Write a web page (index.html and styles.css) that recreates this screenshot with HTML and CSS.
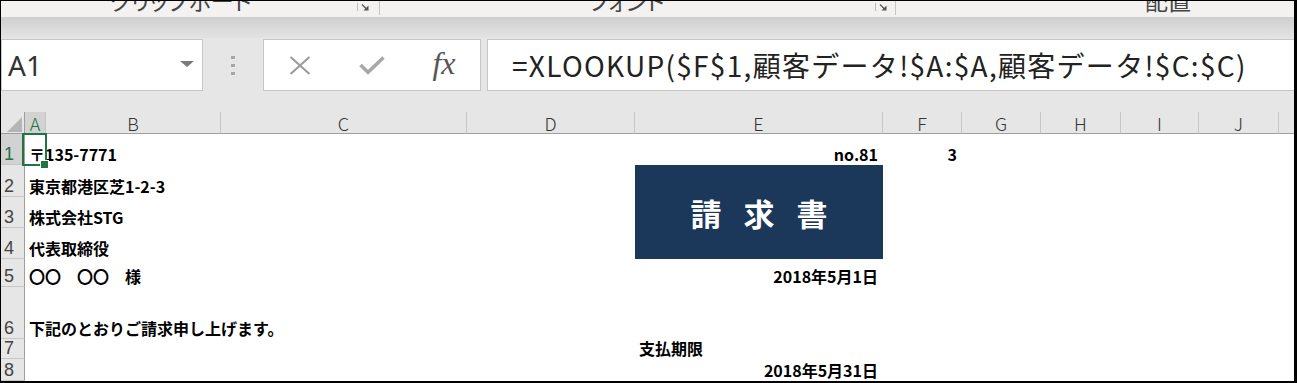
FILE: index.html
```html
<!DOCTYPE html>
<html lang="ja">
<head>
<meta charset="utf-8">
<title>請求書 - Excel</title>
<link rel="stylesheet" href="styles.css">
</head>
<body>
<div class="frame">
  <div class="ribbon">
    <div class="rgroup g1">
      <span class="rlabel">クリップボード</span>
      <svg class="launcher" width="13" height="8" viewBox="0 0 13 8"><path d="M0.5 0 V8" stroke="#bdbdbd" stroke-width="1"/><path d="M5 1.5 L10 6.5" stroke="#555" stroke-width="1.2"/><path d="M6.5 7.5 H11.5 V2.5 Z" fill="#555"/></svg>
    </div>
    <div class="rsep"></div>
    <div class="rgroup g2">
      <span class="rlabel">フォント</span>
      <svg class="launcher l2" width="13" height="8" viewBox="0 0 13 8"><path d="M0.5 0 V8" stroke="#bdbdbd" stroke-width="1"/><path d="M5 1.5 L10 6.5" stroke="#555" stroke-width="1.2"/><path d="M6.5 7.5 H11.5 V2.5 Z" fill="#555"/></svg>
    </div>
    <div class="rsep"></div>
    <div class="rgroup g3">
      <span class="rlabel">配置</span>
    </div>
  </div>
  <div class="band"></div>
  <div class="fbar">
    <div class="namebox"><span class="ref">A1</span><span class="dd"></span></div>
    <div class="grip"><i></i><i></i><i></i></div>
    <div class="fbtns">
      <span class="fbtn"><svg width="22" height="19" viewBox="0 0 22 19"><path d="M1.5 1 L20.5 18 M20.5 1 L1.5 18" stroke="#9c9c9c" stroke-width="2.2" fill="none"/></svg></span>
      <span class="fbtn"><svg width="26" height="20" viewBox="0 0 26 20"><path d="M1.5 10 L9 17.2 L24.5 2.5" stroke="#a8a8a8" stroke-width="3.6" fill="none"/></svg></span>
      <span class="fbtn fx">fx</span>
    </div>
    <div class="formula">=XLOOKUP($F$1,顧客データ!$A:$A,顧客データ!$C:$C)</div>
  </div>
  <div class="sheet">
    <div class="ch corner"><svg width="15" height="15" viewBox="0 0 15 15"><path d="M15 0 V15 H0 Z" fill="#b5b5b5"/></svg></div>
    <div class="ch on">A</div>
    <div class="ch">B</div>
    <div class="ch">C</div>
    <div class="ch">D</div>
    <div class="ch">E</div>
    <div class="ch">F</div>
    <div class="ch">G</div>
    <div class="ch">H</div>
    <div class="ch">I</div>
    <div class="ch">J</div>
    <div class="ch last"></div>

    <div class="rh on">1</div>
    <div class="c cA sel-cell">〒135-7771<span class="sel"></span><span class="handle"></span></div>
    <div class="c cE right">no.81</div>
    <div class="c cF right">3</div>

    <div class="rh">2</div>
    <div class="c cA">東京都港区芝1-2-3</div>
    <div class="title">請求書</div>

    <div class="rh">3</div>
    <div class="c cA">株式会社STG</div>

    <div class="rh">4</div>
    <div class="c cA">代表取締役</div>

    <div class="rh">5</div>
    <div class="c cA">〇〇　〇〇　様</div>
    <div class="c cE right">2018年5月1日</div>

    <div class="rh">6</div>
    <div class="c cA">下記のとおりご請求申し上げます。</div>

    <div class="rh">7</div>
    <div class="c cE">支払期限</div>

    <div class="rh">8</div>
    <div class="c cE right">2018年5月31日</div>
  </div>
</div>
</body>
</html>
```

FILE: styles.css
```css
html, body {
  margin: 0;
  padding: 0;
}

body {
  width: 1297px;
  height: 383px;
  overflow: hidden;
  background: #000;
}

.frame {
  box-sizing: border-box;
  width: 1297px;
  height: 383px;
  border-style: solid;
  border-color: #000;
  border-width: 1px 3px 2px 1px;
  display: flex;
  flex-direction: column;
  background: #fff;
  overflow: hidden;
}

/* ribbon remnant */
.ribbon {
  height: 16px;
  flex: none;
  background: #f3f2f1;
  display: flex;
  overflow: hidden;
  font-family: "Noto Sans CJK JP", sans-serif;
  color: #444;
}

.rgroup {
  display: flex;
  align-items: flex-start;
  box-sizing: border-box;
}

.g1 {
  width: 378px;
  padding-left: 109px;
}

.g2 {
  width: 515px;
  padding-left: 209px;
}

.g3 {
  flex: 1;
  padding-left: 249px;
}

.rlabel {
  font-size: 23px;
  line-height: 24px;
  margin-top: -13px;
  font-feature-settings: "palt";
  white-space: nowrap;
}

.launcher {
  margin-left: auto;
  margin-right: 9px;
  margin-top: 2px;
}

.launcher.l2 {
  margin-right: 7px;
}

.rsep {
  width: 1px;
  height: 14px;
  background: #c6c6c6;
  flex: none;
}

.band {
  height: 21px;
  flex: none;
  background: linear-gradient(#cfcfcf, #e3e3e3);
}

/* formula bar */
.fbar {
  height: 74px;
  flex: none;
  box-sizing: border-box;
  padding-top: 1px;
  background: #e6e6e6;
  display: flex;
  align-items: flex-start;
}

.namebox {
  width: 202px;
  height: 52px;
  box-sizing: border-box;
  background: #fff;
  border: 1px solid #c6c6c6;
  display: flex;
  align-items: center;
  justify-content: space-between;
  padding: 0 8px 0 6px;
}

.ref {
  font-family: "Noto Sans", sans-serif;
  font-size: 28px;
  color: #333;
}

.dd {
  width: 0;
  height: 0;
  border-left: 7px solid transparent;
  border-right: 7px solid transparent;
  border-top: 6px solid #7a7a7a;
  margin-top: -3px;
}

.grip {
  width: 60px;
  height: 52px;
  display: flex;
  flex-direction: column;
  align-items: center;
  justify-content: center;
  gap: 5px;
}

.grip i {
  display: block;
  width: 4px;
  height: 3px;
  background: #a6a6a6;
}

.fbtns {
  width: 218px;
  height: 52px;
  box-sizing: border-box;
  background: #fff;
  border: 1px solid #c6c6c6;
  display: flex;
}

.fbtn {
  width: 72px;
  display: flex;
  align-items: center;
  justify-content: center;
}

.fx {
  font-family: "Liberation Serif", serif;
  font-style: italic;
  font-size: 32px;
  color: #555;
  padding-bottom: 3px;
}

.formula {
  flex: 1;
  margin-left: 6px;
  height: 52px;
  box-sizing: border-box;
  background: #fff;
  border: 1px solid #c6c6c6;
  border-right: none;
  display: flex;
  align-items: center;
  padding-left: 24px;
  font-family: "Noto Sans CJK JP", sans-serif;
  font-size: 28px;
  letter-spacing: 1.3px;
  color: #222;
  white-space: nowrap;
  overflow: hidden;
}

/* sheet */
.sheet {
  flex: 1;
  display: grid;
  grid-template-columns: 24px 21px 175px 246px 168px 248px 79px 79px 80px 78px 80px 1fr;
  grid-template-rows: 22px 31px 32px 31px 31px 28px 52px 20px 1fr;
  overflow: hidden;
  background: #fff;
  font-family: "Noto Sans CJK JP", sans-serif;
}

.ch {
  box-sizing: border-box;
  background: #e6e6e6;
  border-right: 1px solid #c6c6c6;
  border-bottom: 1px solid #9e9e9e;
  display: flex;
  align-items: center;
  justify-content: center;
  font-size: 18px;
  font-weight: 300;
  color: #333;
}

.ch.corner {
  justify-content: flex-end;
  align-items: flex-end;
  padding: 0 2px 1px 0;
  border-right-color: #9e9e9e;
}

.ch.last {
  border-right: none;
}

.ch.on {
  background: #d2d2d2;
  color: #217346;
}

.rh {
  grid-column: 1;
  box-sizing: border-box;
  background: #e6e6e6;
  border-right: 1px solid #9e9e9e;
  border-bottom: 1px solid #c6c6c6;
  display: flex;
  align-items: flex-end;
  padding: 0 0 1px 3px;
  font-family: "Liberation Sans", sans-serif;
  font-size: 18px;
  line-height: 18px;
  color: #444;
  overflow: hidden;
}

.rh.on {
  background: #d2d2d2;
  color: #217346;
}

.c {
  display: flex;
  align-items: flex-end;
  white-space: nowrap;
  padding: 0 5px 1px 4px;
  font-size: 16px;
  line-height: 20px;
  font-weight: 700;
  color: #000;
}

.cA { grid-column: 2; }
.cE { grid-column: 6; }
.cF { grid-column: 7; }

.right {
  justify-content: flex-end;
}

.sel-cell {
  position: relative;
}

.sel {
  position: absolute;
  left: -3px;
  top: -1px;
  right: -1px;
  bottom: -1px;
  border: 2px solid #217346;
}

.handle {
  position: absolute;
  left: 15px;
  top: 26px;
  width: 7px;
  height: 7px;
  background: #217346;
  border: 1px solid #fff;
}

.title {
  grid-column: 6;
  grid-row: span 3;
  background: #1b3759;
  color: #fff;
  display: flex;
  align-items: center;
  justify-content: center;
  font-size: 31px;
  font-weight: 700;
  letter-spacing: 22px;
  padding-left: 22px;
}
```
